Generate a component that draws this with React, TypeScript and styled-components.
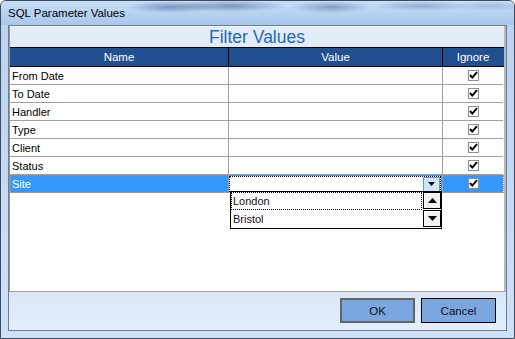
import React from "react";
import styled, { createGlobalStyle } from "styled-components";

const GlobalStyle = createGlobalStyle`
  html, body {
    margin: 0;
    padding: 0;
    background: #ffffff;
  }
  body {
    font-family: "Liberation Sans", Arial, sans-serif;
  }
`;

const Window = styled.div`
  width: 515px;
  height: 339px;
  box-sizing: border-box;
  display: flex;
  flex-direction: column;
  border: 1px solid #3c4b60;
  border-radius: 6px 6px 0 0;
  overflow: hidden;
  background: linear-gradient(#b9d2f0, #cfe1f7);
`;

const TitleBar = styled.div`
  height: 24px;
  flex-shrink: 0;
  display: flex;
  align-items: center;
  padding-left: 7px;
  font-size: 11.5px;
  color: #000;
  background:
    radial-gradient(ellipse 45px 6px at 170px 6px, rgba(60, 95, 150, 0.55), transparent),
    radial-gradient(ellipse 55px 6px at 230px 5px, rgba(60, 95, 150, 0.55), transparent),
    radial-gradient(ellipse 40px 6px at 330px 6px, rgba(70, 100, 155, 0.5), transparent),
    radial-gradient(ellipse 50px 5px at 420px 5px, rgba(90, 120, 165, 0.45), transparent),
    radial-gradient(ellipse 40px 5px at 490px 5px, rgba(110, 135, 175, 0.35), transparent),
    linear-gradient(#c8def6, #a9c6eb);
`;

const Frame = styled.div`
  flex: 1;
  display: flex;
  padding: 0 7px 7px 7px;
`;

const Client = styled.div`
  flex: 1;
  display: flex;
  flex-direction: column;
  border: 1px solid #6b7d95;
  background: #ffffff;
`;

const GridPanel = styled.div`
  flex: 1;
  display: flex;
  flex-direction: column;
  background: #ffffff;
  border-left: 1px solid #9a9a9a;
  border-right: 2px solid #b4bac2;
  border-bottom: 1px solid #a0a0a0;
`;

const FilterTitle = styled.div`
  height: 21px;
  display: flex;
  align-items: center;
  justify-content: center;
  background: #e3ebf6;
  border-top: 1px solid #f4f7fb;
  box-sizing: border-box;
  color: #1c6cb2;
  font-size: 17.5px;
`;

const HeaderRow = styled.div`
  display: grid;
  grid-template-columns: 219px 214px 60px;
  background: #224f8f;
  border-top: 1px solid #000;
  border-bottom: 1px solid #000;
  height: 20px;
  box-sizing: border-box;
`;

const HeaderCell = styled.div<{ $last?: boolean }>`
  display: flex;
  align-items: center;
  justify-content: center;
  color: #ffffff;
  font-size: 11.5px;
  border-right: ${(p) => (p.$last ? "none" : "1px solid #000")};
`;

const Row = styled.div<{ $selected?: boolean }>`
  display: grid;
  grid-template-columns: 219px 214px 60px;
  height: 18px;
  box-sizing: border-box;
  position: relative;
  outline: ${(p) => (p.$selected ? "1px dotted #d9822b" : "none")};
  outline-offset: -1px;
`;

const Cell = styled.div<{ $selected?: boolean; $last?: boolean }>`
  display: flex;
  align-items: center;
  box-sizing: border-box;
  border-bottom: 1px solid #a0a0a0;
  border-right: ${(p) => (p.$last ? "none" : "1px solid #a0a0a0")};
  background: ${(p) => (p.$selected ? "#3399ff" : "#ffffff")};
  color: ${(p) => (p.$selected ? "#ffffff" : "#000000")};
  font-size: 11px;
  padding-left: 2px;
`;

const CheckCell = styled(Cell)`
  justify-content: center;
  padding-left: 0;
`;

const EditCell = styled.div`
  position: relative;
  box-sizing: border-box;
  border-bottom: 1px solid #a0a0a0;
  border-right: 1px solid #a0a0a0;
  background: #3399ff;
  padding: 1px 1px 0 0;
`;

const Editor = styled.div`
  height: 16px;
  box-sizing: border-box;
  background: #ffffff;
  border: 1px dotted #000;
  display: flex;
  justify-content: flex-end;
  align-items: center;
`;

const ComboButton = styled.div`
  width: 17px;
  height: 15px;
  box-sizing: border-box;
  background: #cfe6fa;
  border: 1px solid #5a9ce2;
  display: flex;
  align-items: center;
  justify-content: center;
`;

const DropList = styled.div`
  position: absolute;
  top: 16px;
  left: 1px;
  width: 212px;
  height: 38px;
  box-sizing: border-box;
  border: 1px solid #000;
  background: #ffffff;
  display: flex;
  z-index: 2;
`;

const Items = styled.div`
  flex: 1;
  display: flex;
  flex-direction: column;
`;

const Item = styled.div<{ $focused?: boolean }>`
  height: 18px;
  box-sizing: border-box;
  display: flex;
  align-items: center;
  padding-left: 1px;
  margin-right: 1px;
  font-size: 11px;
  color: #111;
  border: 1px dotted ${(p) => (p.$focused ? "#000" : "transparent")};
`;

const ScrollColumn = styled.div`
  width: 18px;
  display: flex;
  flex-direction: column;
  gap: 1px;
`;

const ScrollButton = styled.div`
  height: 17px;
  box-sizing: border-box;
  border: 1px solid #000;
  background: #f0f0f0;
  box-shadow: inset 1px 1px 0 #ffffff;
  display: flex;
  align-items: center;
  justify-content: center;
`;

const CheckBox = styled.div`
  width: 11px;
  height: 11px;
  box-sizing: border-box;
  border: 1px solid #8e8f8f;
  background: #ffffff;
  display: flex;
  align-items: center;
  justify-content: center;
`;

const ButtonBar = styled.div`
  height: 38px;
  flex-shrink: 0;
  box-sizing: border-box;
  display: flex;
  justify-content: flex-end;
  align-items: flex-start;
  gap: 6px;
  padding: 6px 10px 0 0;
  background: linear-gradient(#dae6f7, #e4eefb);
`;

const DialogButton = styled.button<{ $default?: boolean }>`
  width: 75px;
  height: 25px;
  box-sizing: border-box;
  margin: 0;
  padding: 0;
  background: #7ba7e1;
  border: ${(p) => (p.$default ? "2px solid #636363" : "1px solid #000")};
  font-family: "Liberation Sans", Arial, sans-serif;
  font-size: 11.5px;
  color: #111;
`;

const Check = () => (
  <svg width="9" height="9" viewBox="0 0 9 9">
    <path d="M1 4 L3.3 6.6 L8 1.2" fill="none" stroke="#000" strokeWidth="2" />
  </svg>
);

const Arrow = ({ up }: { up?: boolean }) => (
  <svg width="9" height="5" viewBox="0 0 9 5">
    <path d={up ? "M0 5 L4.5 0 L9 5 Z" : "M0 0 L9 0 L4.5 5 Z"} fill="#000" />
  </svg>
);

const params = ["From Date", "To Date", "Handler", "Type", "Client", "Status"];

export default function App() {
  return (
    <>
      <GlobalStyle />
      <Window>
        <TitleBar>SQL Parameter Values</TitleBar>
        <Frame>
          <Client>
            <GridPanel>
              <FilterTitle>Filter Values</FilterTitle>
              <HeaderRow>
                <HeaderCell>Name</HeaderCell>
                <HeaderCell>Value</HeaderCell>
                <HeaderCell $last>Ignore</HeaderCell>
              </HeaderRow>
              {params.map((name) => (
                <Row key={name}>
                  <Cell>{name}</Cell>
                  <Cell />
                  <CheckCell $last>
                    <CheckBox>
                      <Check />
                    </CheckBox>
                  </CheckCell>
                </Row>
              ))}
              <Row $selected>
                <Cell $selected>Site</Cell>
                <EditCell>
                  <Editor>
                    <ComboButton>
                      <svg width="7" height="4" viewBox="0 0 7 4">
                        <path d="M0 0 L7 0 L3.5 4 Z" fill="#000" />
                      </svg>
                    </ComboButton>
                  </Editor>
                  <DropList>
                    <Items>
                      <Item $focused>London</Item>
                      <Item>Bristol</Item>
                    </Items>
                    <ScrollColumn>
                      <ScrollButton>
                        <Arrow up />
                      </ScrollButton>
                      <ScrollButton>
                        <Arrow />
                      </ScrollButton>
                    </ScrollColumn>
                  </DropList>
                </EditCell>
                <CheckCell $selected $last>
                  <CheckBox>
                    <Check />
                  </CheckBox>
                </CheckCell>
              </Row>
            </GridPanel>
            <ButtonBar>
              <DialogButton $default>OK</DialogButton>
              <DialogButton>Cancel</DialogButton>
            </ButtonBar>
          </Client>
        </Frame>
      </Window>
    </>
  );
}
